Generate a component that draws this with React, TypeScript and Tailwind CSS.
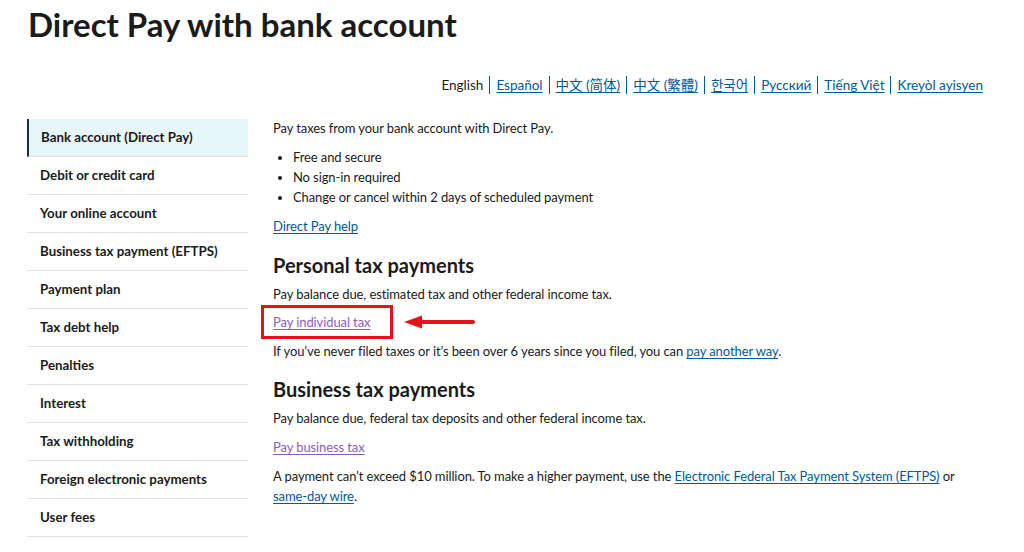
import React from "react"

const languages = [
  { label: "English", current: true },
  { label: "Español" },
  { label: "中文 (简体)" },
  { label: "中文 (繁體)" },
  { label: "한국어" },
  { label: "Русский" },
  { label: "Tiếng Việt" },
  { label: "Kreyòl ayisyen" },
]

const navItems = [
  "Bank account (Direct Pay)",
  "Debit or credit card",
  "Your online account",
  "Business tax payment (EFTPS)",
  "Payment plan",
  "Tax debt help",
  "Penalties",
  "Interest",
  "Tax withholding",
  "Foreign electronic payments",
  "User fees",
]

const font = { fontFamily: '"Lato", "Noto Sans", "Noto Sans CJK KR", sans-serif' }

function Link({ children, visited = false }: { children: React.ReactNode; visited?: boolean }) {
  return (
    <a
      href="#"
      className={
        visited
          ? "text-[#8d5dbb] underline underline-offset-2"
          : "text-[#00599c] underline underline-offset-2"
      }
    >
      {children}
    </a>
  )
}

export default function App() {
  return (
    <div className="min-h-[552px] w-[1024px] bg-white text-[#1b1b1b]" style={font}>
      <h1 className="pl-[28px] pt-[2px] text-[33px] font-bold leading-[44px] text-[#1b1b1b]">
        Direct Pay with bank account
      </h1>

      {/* language switcher */}
      <div className="mt-[29px] flex justify-end pr-[41px] text-[13.5px] leading-[20px]">
        {languages.map((lang, i) => (
          <div key={lang.label} className="flex items-center">
            {i > 0 && <span className="mx-[6px] h-[18px] w-px bg-[#00599c]" />}
            {lang.current ? (
              <span className="text-[#1b1b1b]">{lang.label}</span>
            ) : (
              <Link>{lang.label}</Link>
            )}
          </div>
        ))}
      </div>

      <div className="mt-[24px] flex gap-[25px] pl-[27px]">
        {/* side nav */}
        <nav className="w-[221px] shrink-0">
          <ul>
            {navItems.map((item, i) => (
              <li
                key={item}
                className={
                  i === 0
                    ? "flex h-[38px] items-center border-b border-[#dfe1e2] border-l-[2px] border-l-[#1a2b4c] bg-[#e7f6f8] pl-[12px] text-[13.3px] font-bold text-[#1b1b1b]"
                    : "flex h-[38px] items-center border-b border-[#dfe1e2] pl-[13px] text-[13.3px] font-bold text-[#1b1b1b]"
                }
              >
                {item}
              </li>
            ))}
          </ul>
        </nav>

        {/* main content */}
        <main className="flex-1 pr-[40px] text-[13px] leading-[20px] tracking-[-0.1px]">
          <p className="mt-[-1px]">Pay taxes from your bank account with Direct Pay.</p>
          <ul className="mt-[9px] list-disc pl-[20px]">
            <li>Free and secure</li>
            <li>No sign-in required</li>
            <li>Change or cancel within 2 days of scheduled payment</li>
          </ul>
          <p className="mt-[9px]">
            <Link>Direct Pay help</Link>
          </p>

          <h2 className="mt-[17px] text-[20px] font-bold leading-[24px] tracking-normal">Personal tax payments</h2>
          <p className="mt-[7px]">Pay balance due, estimated tax and other federal income tax.</p>
          <div className="mt-[8px] flex items-center">
            <div className="-ml-[12px] -my-[7px] border-[3px] border-[#e5141b] py-[4px] pl-[9px] pr-[20px]">
              <Link visited>Pay individual tax</Link>
            </div>
            <svg width="72" height="14" viewBox="0 0 72 14" className="ml-[10px]">
              <path d="M70 7H16" stroke="#e5141b" strokeWidth="4" strokeLinecap="round" />
              <path d="M1 7L19 0.5V13.5Z" fill="#e5141b" />
            </svg>
          </div>
          <p className="mt-[9px]">
            If you’ve never filed taxes or it’s been over 6 years since you filed, you can{" "}
            <Link>pay another way</Link>.
          </p>

          <h2 className="mt-[16px] text-[20px] font-bold leading-[24px] tracking-normal">Business tax payments</h2>
          <p className="mt-[7px]">Pay balance due, federal tax deposits and other federal income tax.</p>
          <p className="mt-[9px]">
            <Link visited>Pay business tax</Link>
          </p>
          <p className="mt-[9px]">
            A payment can’t exceed $10 million. To make a higher payment, use the{" "}
            <Link>Electronic Federal Tax Payment System (EFTPS)</Link> or <Link>same-day wire</Link>.
          </p>
        </main>
      </div>
    </div>
  )
}
